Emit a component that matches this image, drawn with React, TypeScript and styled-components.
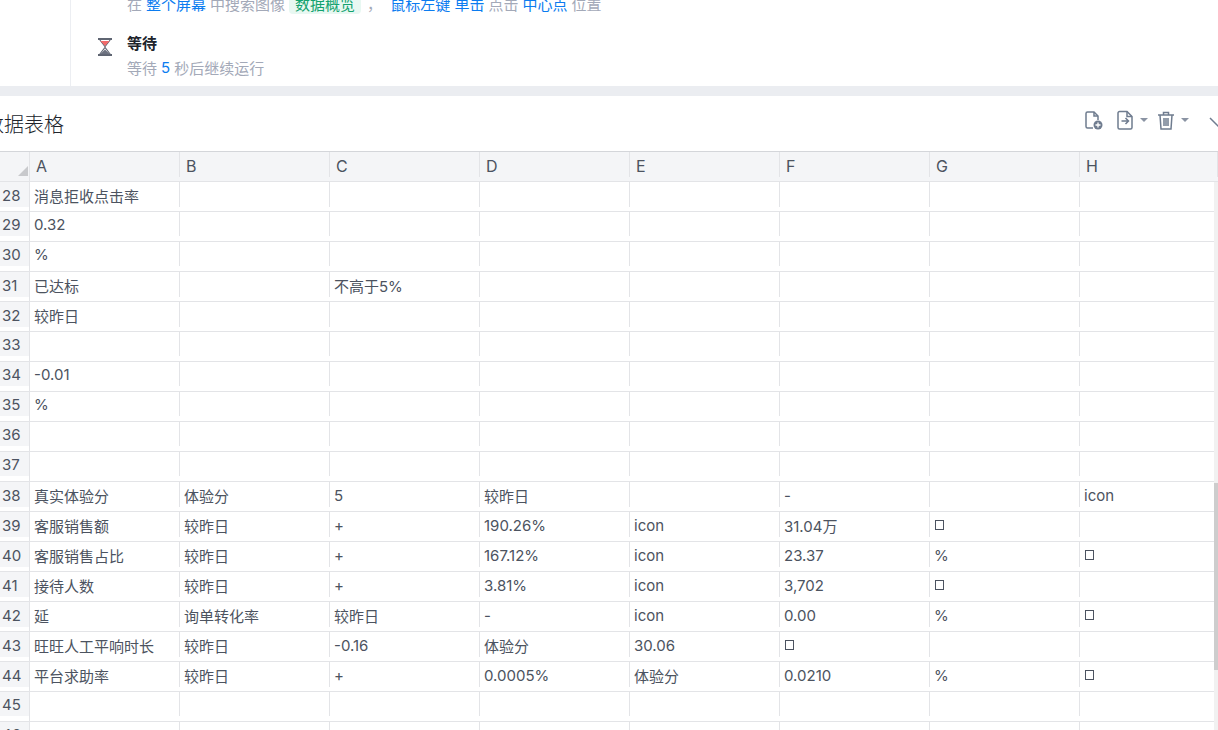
import React from "react";
import styled, { createGlobalStyle } from "styled-components";

const GlobalStyle = createGlobalStyle`
  html, body {
    margin: 0;
    padding: 0;
    width: 1218px;
    height: 730px;
    overflow: hidden;
    background: #fff;
    font-family: Inter, "Noto Sans CJK SC", sans-serif;
  }
`;

const Page = styled.div`
  display: flex;
  flex-direction: column;
  width: 1218px;
  height: 730px;
  overflow: hidden;
`;

const FlowPanel = styled.div`
  flex: 0 0 86px;
  overflow: hidden;
  padding-left: 70px;
  box-sizing: border-box;
`;

const FlowBody = styled.div`
  height: calc(100% + 8px);
  border-left: 1px solid #eceef2;
  box-sizing: border-box;
  padding-left: 26px;
  margin-top: -8px;
`;

const StepText = styled.div`
  padding-left: 30px;
  height: 22px;
  display: flex;
  align-items: center;
  gap: 4px;
  font-size: 15px;
  color: #a3a9b8;
  white-space: nowrap;
`;

const Accent = styled.span`
  color: #0b7cf0;
`;

const Tag = styled.span`
  color: #12a26e;
  background: #e8f8f2;
  border-radius: 4px;
  padding: 0 6px;
  margin-right: 2px;
`;

const Step = styled.div`
  display: flex;
  gap: 14px;
  margin-top: 19px;
`;

const StepBody = styled.div`
  display: flex;
  flex-direction: column;
`;

const StepTitle = styled.div`
  height: 22px;
  line-height: 22px;
  font-size: 15px;
  font-weight: 700;
  color: #20242c;
`;

const StepDetail = styled(StepText)`
  padding-left: 0;
  margin-top: 1px;
`;

const HourglassIcon = styled.svg`
  width: 16px;
  height: 18px;
  margin-top: 5px;
`;

const Band = styled.div`
  flex: 0 0 10px;
  background: #ebedf1;
`;

const Header = styled.div`
  flex: 0 0 55px;
  display: flex;
  align-items: flex-start;
  justify-content: space-between;
`;

const Title = styled.h2`
  margin: 16px 0 0 -16px;
  font-size: 20px;
  line-height: 26px;
  font-weight: 300;
  color: #20242c;
`;

const Tools = styled.div`
  display: flex;
  align-items: center;
  margin: 14px -9px 0 0;
  gap: 12px;
`;

const ToolGroup = styled.div`
  display: flex;
  align-items: center;
  gap: 5px;
`;

const ToolIcon = styled.svg<{ $push?: number }>`
  width: 20px;
  height: 20px;
  fill: none;
  stroke: #6f7c8f;
  stroke-width: 1.5;
  display: block;
  margin-left: ${(p) => p.$push ?? 0}px;
`;

const Caret = styled.span`
  width: 0;
  height: 0;
  border-left: 4px solid transparent;
  border-right: 4px solid transparent;
  border-top: 4px solid #8a93a3;
`;

const Sheet = styled.div`
  position: relative;
  flex: 1;
  overflow: hidden;
  border-top: 1px solid #d4d6da;
`;

const Row = styled.div<{ $head?: boolean }>`
  display: grid;
  grid-template-columns: 30px repeat(7, 150px) 1fr;
  height: 30px;
  box-sizing: border-box;
  border-bottom: 1px solid #e3e4e7;
  background: ${(p) => (p.$head ? "#f4f5f7" : "#fff")};
  font-size: 15px;
  color: #4c5360;
`;

const Cell = styled.div`
  display: flex;
  align-items: center;
  padding: 1px 0 0 4px;
  border-right: 1px solid #e3e4e7;
  white-space: nowrap;
  overflow: hidden;
`;

const HeadCell = styled(Cell)`
  padding: 2px 0 0 6px;
  font-size: 16px;
`;

const RowNum = styled(Cell)`
  position: relative;
  background: #f4f5f7;
  padding-left: 2px;
  font-size: 15px;
`;

const CornerMark = styled.span`
  position: absolute;
  right: 1px;
  bottom: 1px;
  width: 0;
  height: 0;
  border-left: 10px solid transparent;
  border-bottom: 10px solid #c8c9cc;
`;

const Tofu = styled.span`
  display: inline-block;
  width: 9px;
  height: 10px;
  box-sizing: border-box;
  border: 1px solid #4c5360;
  margin-left: 1px;
`;

const ScrollTrack = styled.div`
  position: absolute;
  top: 30px;
  right: 0;
  bottom: 0;
  width: 4px;
  background: #f1f1f1;
`;

const ScrollThumb = styled.div`
  position: absolute;
  top: 301px;
  left: 0;
  right: 0;
  height: 187px;
  background: #cdcdcd;
`;

const T = "□";
const columns = ["A", "B", "C", "D", "E", "F", "G", "H"];
const rows: [number, string[]][] = [
  [28, ["消息拒收点击率"]],
  [29, ["0.32"]],
  [30, ["%"]],
  [31, ["已达标", "", "不高于5%"]],
  [32, ["较昨日"]],
  [33, []],
  [34, ["-0.01"]],
  [35, ["%"]],
  [36, []],
  [37, []],
  [38, ["真实体验分", "体验分", "5", "较昨日", "", "-", "", "icon"]],
  [39, ["客服销售额", "较昨日", "+", "190.26%", "icon", "31.04万", T]],
  [40, ["客服销售占比", "较昨日", "+", "167.12%", "icon", "23.37", "%", T]],
  [41, ["接待人数", "较昨日", "+", "3.81%", "icon", "3,702", T]],
  [42, ["延", "询单转化率", "较昨日", "-", "icon", "0.00", "%", T]],
  [43, ["旺旺人工平响时长", "较昨日", "-0.16", "体验分", "30.06", T]],
  [44, ["平台求助率", "较昨日", "+", "0.0005%", "体验分", "0.0210", "%", T]],
  [45, []],
  [46, []],
];

export default function App() {
  return (
    <Page>
      <GlobalStyle />
      <FlowPanel>
        <FlowBody>
          <StepText>
            在 <Accent>整个屏幕</Accent> 中搜索图像 <Tag>数据概览</Tag> ，
            <Accent>&nbsp;鼠标左键 单击</Accent> 点击 <Accent>中心点</Accent> 位置
          </StepText>
          <Step>
            <HourglassIcon viewBox="0 0 16 18">
              <path d="M1 1h14M1 17h14" stroke="#5f6572" strokeWidth="1.8" />
              <path d="M2.500 1.500 8 8.600l5.500-7.100M2.500 16.500 8 9.400l5.500 7.100" fill="none" stroke="#5f6572" strokeWidth="1.100" />
              <path d="M3.500 3h9L8 8z" fill="#f26a6a" />
              <path d="M3 16.200 8 11.500l5 4.700z" fill="#6d7280" />
            </HourglassIcon>
            <StepBody>
              <StepTitle>等待</StepTitle>
              <StepDetail>
                等待 <Accent>5</Accent> 秒后继续运行
              </StepDetail>
            </StepBody>
          </Step>
        </FlowBody>
      </FlowPanel>
      <Band />
      <Header>
        <Title>数据表格</Title>
        <Tools>
          <ToolIcon viewBox="0 0 20 20">
            <path d="M10 18H4.500A1.500 1.500 0 0 1 3 16.500v-13A1.500 1.500 0 0 1 4.500 2H11l4 4v4" />
            <path d="M11 2v4h4" />
            <circle cx="15" cy="15" r="4.500" fill="#6f7c8f" stroke="none" />
            <path d="M15 12.500v5M12.500 15h5" stroke="#fff" strokeWidth="1.300" />
          </ToolIcon>
          <ToolGroup>
            <ToolIcon viewBox="0 0 20 20">
              <path d="M4.500 1.500H12l5 5v11a1.500 1.500 0 0 1-1.500 1.500h-11A1.500 1.500 0 0 1 3 17.500v-14.500a1.500 1.500 0 0 1 1.500-1.500z" />
              <path d="M12 1.500v5h5M6.500 11h7M10.500 8l3 3-3 3" />
            </ToolIcon>
            <Caret />
          </ToolGroup>
          <ToolGroup>
            <ToolIcon $push={-4} viewBox="0 0 20 20">
              <path d="M2 5h16M7.500 4.500V2.500h5v2M4 5l1 14h10l1-14M8 8v8M10 8v8M12 8v8" />
            </ToolIcon>
            <Caret />
          </ToolGroup>
          <ToolIcon $push={6} viewBox="0 0 20 20">
            <path d="M3 8l8 8 8-8" />
          </ToolIcon>
        </Tools>
      </Header>
      <Sheet>
        <Row $head>
          <RowNum>
            <CornerMark />
          </RowNum>
          {columns.map((c) => (
            <HeadCell key={c}>{c}</HeadCell>
          ))}
          <Cell />
        </Row>
        {rows.map(([num, cells]) => (
          <Row key={num}>
            <RowNum>{num}</RowNum>
            {columns.map((c, i) => (
              <Cell key={c}>{cells[i] === T ? <Tofu /> : cells[i]}</Cell>
            ))}
            <Cell />
          </Row>
        ))}
        <ScrollTrack>
          <ScrollThumb />
        </ScrollTrack>
      </Sheet>
    </Page>
  );
}
